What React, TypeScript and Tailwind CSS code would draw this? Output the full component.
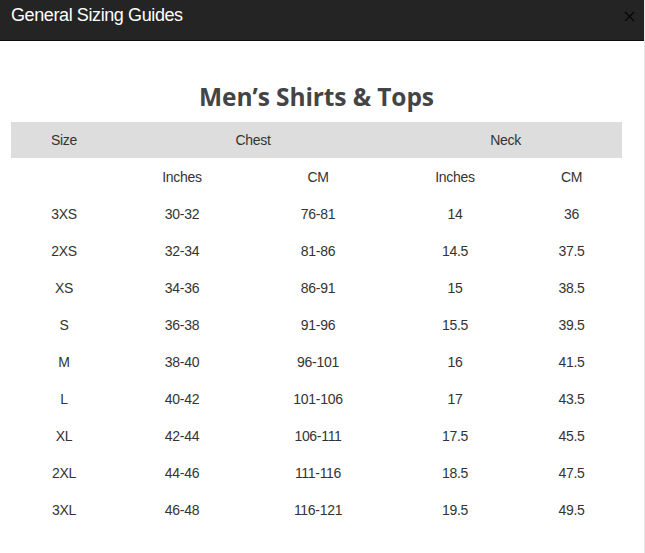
import { X } from "lucide-react";

const rows = [
    ["3XS", "30-32", "76-81", "14", "36"],
    ["2XS", "32-34", "81-86", "14.5", "37.5"],
    ["XS", "34-36", "86-91", "15", "38.5"],
    ["S", "36-38", "91-96", "15.5", "39.5"],
    ["M", "38-40", "96-101", "16", "41.5"],
    ["L", "40-42", "101-106", "17", "43.5"],
    ["XL", "42-44", "106-111", "17.5", "45.5"],
    ["2XL", "44-46", "111-116", "18.5", "47.5"],
    ["3XL", "46-48", "116-121", "19.5", "49.5"],
];

const cols = "grid grid-cols-[106px_130px_142px_132px_101px]";

const App = () => {
    return (
        <div className="w-[645px] h-[553px] bg-white border-r border-[#e6e6e6] overflow-hidden font-['Liberation_Sans',Arial,sans-serif] text-[#333]">
            <header className="h-[41px] bg-[#242424] border-b border-[#0c0c0c] flex items-start justify-between pl-[11px] pr-[6px]">
                <h1 className="text-white text-[18px] leading-[30px] tracking-[-0.4px]">General Sizing Guides</h1>
                <X className="mt-[8px] text-[#050505]" size={17} strokeWidth={1.5} />
            </header>

            <div className="mx-[11px] w-[611px] text-[14px] tracking-[-0.3px]">
                <h2 className="mt-[40px] mb-[9px] h-[32px] leading-[32px] text-center text-[24.5px] font-bold text-[#444] font-['Open_Sans',sans-serif] tracking-[-0.1px]">
                    Men’s Shirts &amp; Tops
                </h2>

                {/* top header */}
                <div className="grid grid-cols-[106px_272px_233px] h-[36px] items-center bg-[#dddddd] text-center">
                    <span>Size</span>
                    <span>Chest</span>
                    <span>Neck</span>
                </div>

                <div className={`${cols} h-[37px] items-center text-center pt-[2px]`}>
                    <span></span>
                    <span>Inches</span>
                    <span>CM</span>
                    <span>Inches</span>
                    <span>CM</span>
                </div>

                {rows.map((r) => (
                    <div key={r[0]} className={`${cols} h-[37px] items-center text-center pt-[2px]`}>
                        {r.map((c, i) => (
                            <span key={i}>{c}</span>
                        ))}
                    </div>
                ))}
            </div>
        </div>
    );
};

export default App;
